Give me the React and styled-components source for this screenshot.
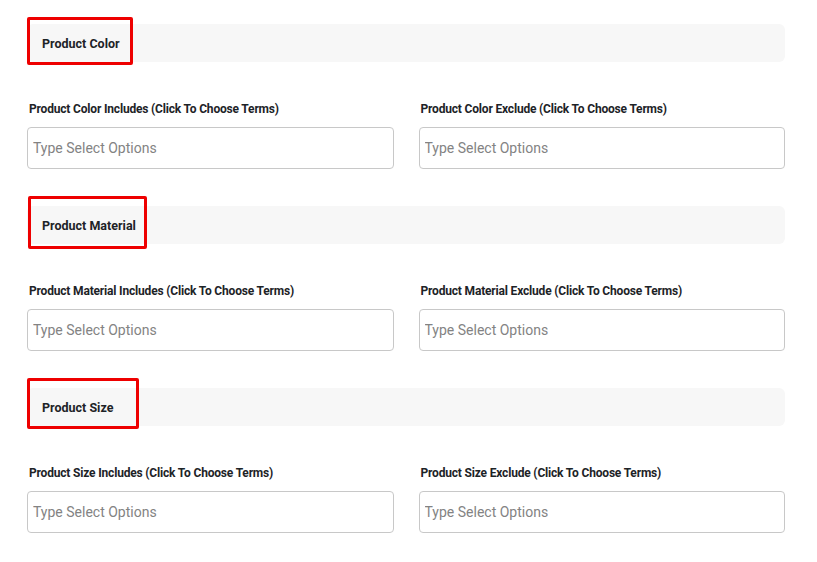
import React from "react";
import styled, { createGlobalStyle } from "styled-components";

const GlobalStyle = createGlobalStyle`
  body {
    margin: 0;
    background: #ffffff;
    font-family: Roboto, "Liberation Sans", sans-serif;
  }
`;

const Page = styled.div`
  width: 758px;
  padding: 24px 0 0 27px;
  display: flex;
  flex-direction: column;
  gap: 37px;
`;

const Section = styled.section`
  display: flex;
  flex-direction: column;
  gap: 39px;
`;

const Header = styled.div`
  position: relative;
  height: 38px;
  display: flex;
  align-items: center;
  padding-left: 15px;
  background: #f7f7f7;
  border-radius: 6px;
  font-size: 12.5px;
  font-weight: 700;
  color: #1d2327;
`;

const Highlight = styled.span`
  position: absolute;
  left: ${(p) => p.$left}px;
  top: ${(p) => p.$top}px;
  width: ${(p) => p.$width}px;
  height: ${(p) => p.$height}px;
  border: 3px solid #ee0000;
  box-sizing: border-box;
  border-radius: 2px;
  pointer-events: none;
`;

const Fields = styled.div`
  display: grid;
  grid-template-columns: 1fr 1fr;
  column-gap: 25px;
`;

const Field = styled.div`
  display: flex;
  flex-direction: column;
  gap: 10px;
`;

const Label = styled.label`
  padding-left: 2px;
  font-size: 12px;
  line-height: 16px;
  font-weight: 700;
  color: #1d2327;
  letter-spacing: -0.18px;
`;

const Input = styled.input`
  box-sizing: border-box;
  height: 42px;
  width: 100%;
  padding: 0 5px;
  border: 1px solid #c8c8c8;
  border-radius: 4px;
  font-family: Roboto, "Liberation Sans", sans-serif;
  font-size: 14px;
  color: #333;
  outline: none;

  &::placeholder {
    color: #838383;
  }
`;

const sections = [
  { name: "Color", box: { left: 0, top: -7, width: 106, height: 48 } },
  { name: "Material", box: { left: 1, top: -10, width: 119, height: 53 } },
  { name: "Size", box: { left: 0, top: -10, width: 112, height: 51 } },
];

const App = () => (
  <>
    <GlobalStyle />
    <Page>
      {sections.map((s) => (
        <Section key={s.name}>
          <Header>
            Product {s.name}
            <Highlight
              $left={s.box.left}
              $top={s.box.top}
              $width={s.box.width}
              $height={s.box.height}
            />
          </Header>
          <Fields>
            <Field>
              <Label>Product {s.name} Includes (Click To Choose Terms)</Label>
              <Input placeholder="Type Select Options" />
            </Field>
            <Field>
              <Label>Product {s.name} Exclude (Click To Choose Terms)</Label>
              <Input placeholder="Type Select Options" />
            </Field>
          </Fields>
        </Section>
      ))}
    </Page>
  </>
);

export default App;
